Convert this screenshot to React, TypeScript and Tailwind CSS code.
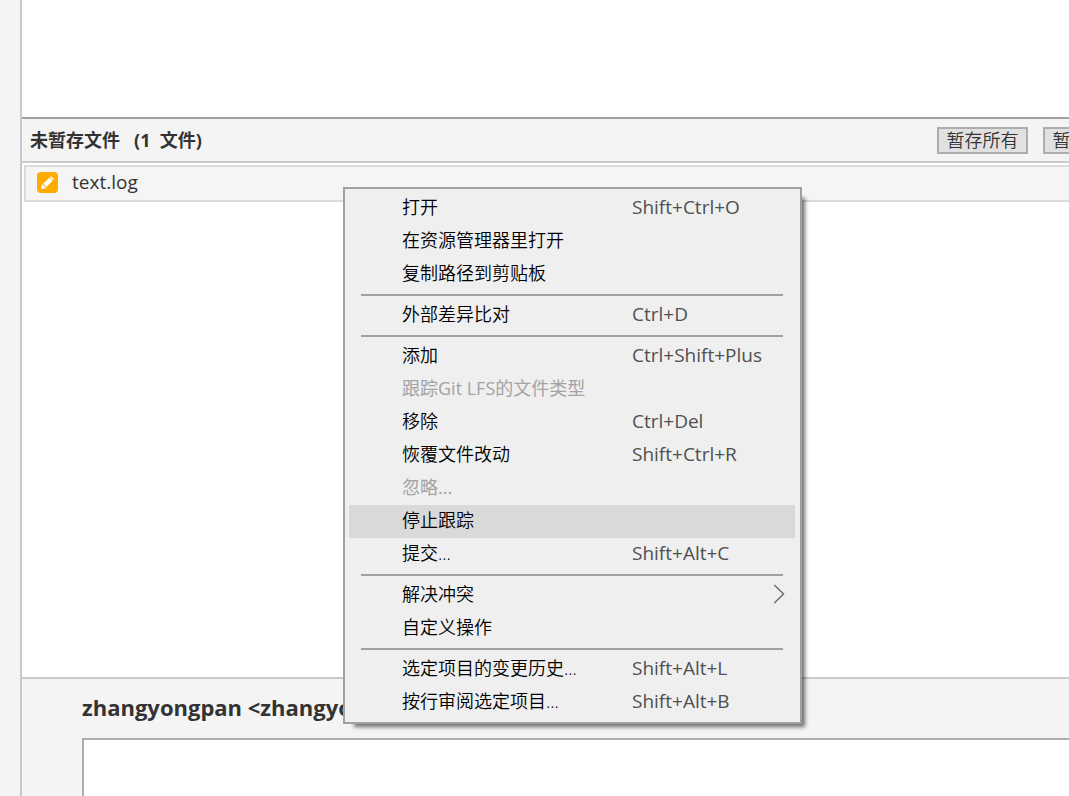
type MenuEntry =
  | { kind: "item"; label: string; shortcut?: string; disabled?: boolean; active?: boolean; submenu?: boolean }
  | { kind: "separator" };

const menuEntries: MenuEntry[] = [
  { kind: "item", label: "打开", shortcut: "Shift+Ctrl+O" },
  { kind: "item", label: "在资源管理器里打开" },
  { kind: "item", label: "复制路径到剪贴板" },
  { kind: "separator" },
  { kind: "item", label: "外部差异比对", shortcut: "Ctrl+D" },
  { kind: "separator" },
  { kind: "item", label: "添加", shortcut: "Ctrl+Shift+Plus" },
  { kind: "item", label: "跟踪Git LFS的文件类型", disabled: true },
  { kind: "item", label: "移除", shortcut: "Ctrl+Del" },
  { kind: "item", label: "恢覆文件改动", shortcut: "Shift+Ctrl+R" },
  { kind: "item", label: "忽略...", disabled: true },
  { kind: "item", label: "停止跟踪", active: true },
  { kind: "item", label: "提交...", shortcut: "Shift+Alt+C" },
  { kind: "separator" },
  { kind: "item", label: "解决冲突", submenu: true },
  { kind: "item", label: "自定义操作" },
  { kind: "separator" },
  { kind: "item", label: "选定项目的变更历史...", shortcut: "Shift+Alt+L" },
  { kind: "item", label: "按行审阅选定项目...", shortcut: "Shift+Alt+B" },
];

function ModifiedIcon() {
  return (
    <svg className="size-[21px] shrink-0" viewBox="0 0 21 21" aria-hidden="true">
      <rect width="21" height="21" rx="4" fill="#ffab00" />
      <path d="M4.6 16.5 5.4 12.6 8.6 15.8Z" fill="#fff" stroke="#fff" strokeWidth="1" strokeLinejoin="round" />
      <path d="M6.2 11.6 12.3 5.7 15.5 8.8 9.5 14.9Z" fill="#fff" />
      <path d="M12.9 5.2 13.4 4.8Q14.1 4.3 14.8 4.9L16.2 6.3Q16.8 7 16.3 7.7L15.9 8.2Z" fill="#fff" />
    </svg>
  );
}

function ContextMenu() {
  return (
    <div
      role="menu"
      className="absolute top-[187px] left-[343px] w-[459px] border-2 border-[#a0a0a0] bg-[#efefef] py-[3px] pr-[5px] pl-1 font-[350] shadow-[7px_7px_4px_-4px_rgba(0,0,0,0.55)]"
    >
      {menuEntries.map((entry, index) =>
        entry.kind === "separator" ? (
          <div key={index} role="separator" className="mr-3 ml-3 flex h-2 items-start pt-[3px]">
            <div className="h-[2px] w-full bg-[#a0a0a0]" />
          </div>
        ) : (
          <button
            key={index}
            type="button"
            role="menuitem"
            disabled={entry.disabled}
            className={`flex h-[33px] w-full items-center pb-[3px] pl-[53px] text-left text-black disabled:font-normal disabled:text-[#a3a3a3] ${
              entry.active ? "bg-[#d9d9d9]" : "bg-transparent"
            }`}
          >
            <span className="w-[230px] shrink-0 whitespace-nowrap">{entry.label}</span>
            {entry.shortcut && <span className="text-[19px] font-normal whitespace-nowrap text-[#505050]">{entry.shortcut}</span>}
            {entry.submenu && (
              <svg className="mr-[10px] ml-auto h-5 w-3" viewBox="0 0 12 20" fill="none" stroke="#666" strokeWidth="1.3" aria-hidden="true">
                <path d="M1.3 1 10.6 10 1.3 19" />
              </svg>
            )}
          </button>
        ),
      )}
    </div>
  );
}

export default function App() {
  return (
    <div className="relative flex h-screen overflow-hidden bg-[#f4f4f4] font-['Open_Sans','Noto_Sans_CJK_SC',sans-serif] text-[18px] leading-6 text-[#333]">
      <aside className="w-[22px] shrink-0 border-r-2 border-[#c9c9c9]" />
      <main className="flex min-w-0 flex-1 flex-col">
        <section className="h-[117px] shrink-0 bg-white" />
        <header className="flex h-[46px] shrink-0 items-center border-t-2 border-b-2 border-t-[#a0a0a0] border-b-[#cbcbcb] pl-2">
          <h2 className="font-bold whitespace-pre">未暂存文件   (1  文件)</h2>
          <div className="ml-auto flex w-[132px] shrink-0 gap-[15px] overflow-hidden">
            <button type="button" className="flex h-[27px] w-[91px] shrink-0 items-center justify-center border-2 border-[#adadad] bg-[#e1e1e1] font-[350]">
              暂存所有
            </button>
            <button type="button" className="flex h-[27px] w-[91px] shrink-0 items-center justify-center border-2 border-[#adadad] bg-[#e1e1e1] font-[350]">
              暂存所选
            </button>
          </div>
        </header>
        <ul className="min-h-0 flex-1 bg-white pt-[2px] pl-[2px]">
          <li className="flex h-[37px] items-center gap-[14px] border-2 border-r-0 border-[#dadada] bg-[#f5f5f5] pb-[2px] pl-[11px]">
            <ModifiedIcon />
            <span className="pb-[2px] text-[19px]">text.log</span>
          </li>
        </ul>
        <footer className="flex h-[119px] shrink-0 flex-col border-t-2 border-[#c9c9c9] pl-[60px]">
          <label htmlFor="commit-message" className="flex h-[59px] shrink-0 items-center pb-[4px] text-[22px] font-bold whitespace-pre">
            zhangyongpan &lt;zhangyongpan&gt;
          </label>
          <textarea
            id="commit-message"
            className="block w-full flex-1 resize-none border-2 border-r-0 border-b-0 border-[#abadb3] bg-white p-2 outline-none"
          />
        </footer>
      </main>
      <ContextMenu />
    </div>
  );
}
